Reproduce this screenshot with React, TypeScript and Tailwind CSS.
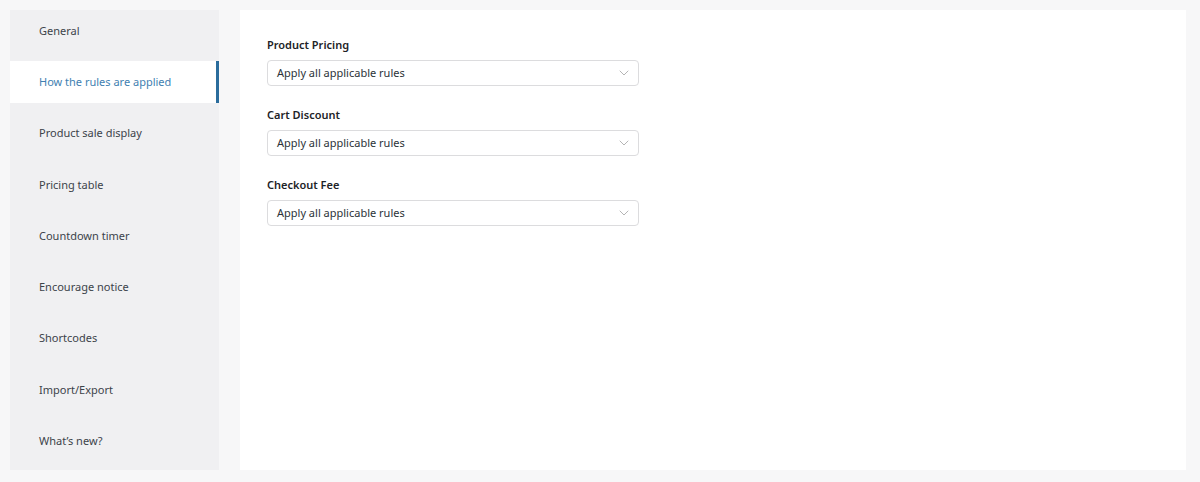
import React from "react";

const navItems = [
  "General",
  "How the rules are applied",
  "Product sale display",
  "Pricing table",
  "Countdown timer",
  "Encourage notice",
  "Shortcodes",
  "Import/Export",
  "What’s new?",
];

const fields = ["Product Pricing", "Cart Discount", "Checkout Fee"];

function Chevron() {
  return (
    <svg width="10" height="6" viewBox="0 0 10 6" fill="none" className="text-[#b5b5b5]">
      <path d="M1 1l4 4 4-4" stroke="currentColor" strokeWidth="1" strokeLinecap="round" strokeLinejoin="round" />
    </svg>
  );
}

export default function App() {
  return (
    <div
      className="w-[1200px] h-[482px] bg-[#f7f7f8] flex gap-[21px] pl-[10px] pt-[10px] pr-[14px] pb-[12px]"
      style={{ fontFamily: '"Noto Sans", "Open Sans", Arial, sans-serif' }}
    >
      <div className="w-[209px] bg-[#f0f0f2] flex flex-col gap-[9.25px] pb-[8px]">
        {navItems.map((item, i) => {
          const active = i === 1;
          return (
            <div
              key={item}
              className={`h-[42px] flex items-center pl-[29px] text-[11px] ${
                active
                  ? "bg-white text-[#3f7fb1] border-r-[3px] border-[#2a6c9c]"
                  : "text-[#3c434a]"
              }`}
            >
              {item}
            </div>
          );
        })}
      </div>
      <div className="flex-1 bg-white pt-[25px] pl-[27px]">
        <div className="flex flex-col gap-[19px] w-[372px]">
          {fields.map((f) => (
            <div key={f} className="flex flex-col gap-[5px]">
              <div className="text-[11px] font-semibold text-[#1d2327] leading-[20px] h-[20px]">{f}</div>
              <div className="h-[26px] border border-[#dcdcde] rounded-[4px] flex items-center justify-between pl-[9px] pr-[9px]">
                <span className="text-[11px] text-[#2c3338]">Apply all applicable rules</span>
                <Chevron />
              </div>
            </div>
          ))}
        </div>
      </div>
    </div>
  );
}
